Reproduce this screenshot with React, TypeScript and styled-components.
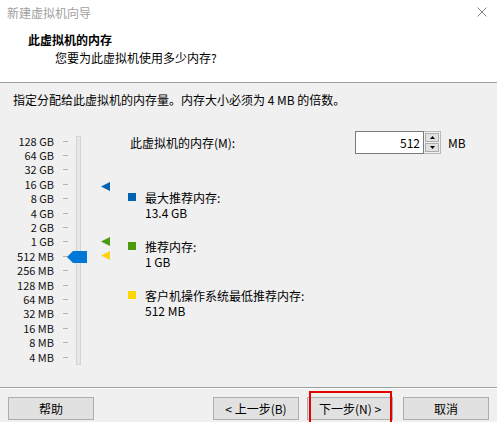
import styled, { createGlobalStyle } from "styled-components";

const GlobalStyle = createGlobalStyle`
  html, body {
    margin: 0;
    padding: 0;
    background: #f0f0f0;
  }
  * {
    box-sizing: border-box;
  }
`;

const font = `"Noto Sans CJK SC", "Noto Sans", sans-serif`;

const scaleLabels = [
  "128 GB",
  "64 GB",
  "32 GB",
  "16 GB",
  "8 GB",
  "4 GB",
  "2 GB",
  "1 GB",
  "512 MB",
  "256 MB",
  "128 MB",
  "64 MB",
  "32 MB",
  "16 MB",
  "8 MB",
  "4 MB",
];

const Wizard = styled.div`
  width: 497px;
  height: 422px;
  display: flex;
  flex-direction: column;
  background: #f0f0f0;
  font-family: ${font};
  font-size: 12px;
  color: #000;
  overflow: hidden;
  position: relative;
`;

const Header = styled.header`
  height: 83px;
  flex-shrink: 0;
  background: #fff;
  border-bottom: 1px solid #a0a0a0;
  display: flex;
  flex-direction: column;
`;

const TitleBar = styled.div`
  height: 26px;
  display: flex;
  align-items: center;
  justify-content: space-between;
  padding: 0 10px 0 7px;
`;

const WindowTitle = styled.span`
  color: #a0a0a0;
  font-size: 12px;
  line-height: 16px;
`;

const CloseGlyph = styled.svg`
  display: block;
  margin-top: -2px;
`;

const Heading = styled.h1`
  margin: 6px 0 0 28px;
  font-size: 12px;
  font-weight: 700;
  line-height: 16px;
`;

const Subheading = styled.p`
  margin: 2px 0 0 55px;
  font-size: 12px;
  line-height: 16px;
`;

const Body = styled.main`
  flex: 1;
  display: flex;
  flex-direction: column;
  padding-top: 9px;
`;

const Instruction = styled.p`
  margin: 0 0 0 13px;
  line-height: 16px;
`;

const MainRow = styled.div`
  display: flex;
  margin-top: 22px;
`;

const Scale = styled.div`
  position: relative;
  width: 128px;
  flex-shrink: 0;
  display: flex;
  height: 240px;
`;

const ScaleLabels = styled.div`
  width: 68px;
  padding-top: 4px;
  display: flex;
  flex-direction: column;
`;

const ScaleRow = styled.div`
  height: 14.4px;
  display: flex;
  align-items: center;
`;

const ScaleText = styled.span`
  width: 54px;
  text-align: right;
  font-size: 11px;
  line-height: 13px;
  color: #111;
  white-space: nowrap;
`;

const Tick = styled.span`
  width: 5px;
  height: 1px;
  margin-left: 9px;
  background: #b4b4b4;
`;

const Track = styled.div`
  margin: 6px 0 0 8px;
  width: 5px;
  height: 229px;
  border: 1px solid #d4d4d4;
  background: #e7e7e7;
`;

const Thumb = styled.svg`
  position: absolute;
  left: 67px;
  top: 121px;
`;

const Marker = styled.svg<{ $top: number }>`
  position: absolute;
  left: 101px;
  top: ${(p) => p.$top}px;
`;

const Content = styled.div`
  flex: 1;
  padding-right: 23px;
  display: flex;
  flex-direction: column;
`;

const MemoryRow = styled.div`
  display: flex;
  align-items: center;
  height: 23px;
  margin-top: 1px;
`;

const MemoryLabel = styled.label`
  flex: 1;
  padding-left: 2px;
  line-height: 16px;
`;

const TextField = styled.div`
  width: 69px;
  height: 23px;
  border: 1px solid #7a7a7a;
  background: #fff;
  text-align: right;
  padding-right: 3px;
  line-height: 21px;
  font-size: 12px;
`;

const Spinner = styled.div`
  width: 17px;
  height: 23px;
  border: 1px solid #b9b9b9;
  border-left: 0;
  background: #f0f0f0;
  display: flex;
  flex-direction: column;
  gap: 1px;
  padding: 1px;
`;

const SpinButton = styled.div`
  flex: 1;
  background: #e1e1e1;
  border: 1px solid #adadad;
  display: flex;
  align-items: center;
  justify-content: center;
`;

const Unit = styled.span`
  width: 26px;
  margin-left: 7px;
  line-height: 16px;
`;

const Legend = styled.div`
  margin-top: 36px;
  display: flex;
  flex-direction: column;
  gap: 19px;
`;

const LegendItem = styled.div`
  display: flex;
  align-items: flex-start;
`;

const Swatch = styled.span<{ $color: string }>`
  width: 8px;
  height: 8px;
  margin-top: 3px;
  margin-right: 9px;
  flex-shrink: 0;
  background: ${(p) => p.$color};
`;

const LegendText = styled.div`
  line-height: 15px;
`;

const Footer = styled.footer`
  height: 35px;
  flex-shrink: 0;
  border-top: 1px solid #a0a0a0;
  box-shadow: inset 0 1px 0 #fff;
  display: flex;
  align-items: flex-start;
  padding: 9px 8px 0 8px;
  position: relative;
`;

const Button = styled.button<{ $gap?: number }>`
  width: 86px;
  height: 23px;
  margin-left: ${(p) => p.$gap ?? 0}px;
  padding: 0;
  border: 1px solid #adadad;
  background: #e1e1e1;
  font-family: ${font};
  font-size: 12px;
  line-height: 16px;
  color: #000;
`;

const Highlight = styled.div`
  position: absolute;
  left: 309px;
  top: 3px;
  width: 83px;
  height: 40px;
  border: 2px solid #e60000;
  pointer-events: none;
`;

const markers = [
  { top: 52, color: "#0063b1" },
  { top: 107, color: "#4c9a0e" },
  { top: 121, color: "#fcd116" },
];

const legend = [
  { color: "#0063b1", label: "最大推荐内存:", value: "13.4 GB" },
  { color: "#4c9a0e", label: "推荐内存:", value: "1 GB" },
  { color: "#fcd700", label: "客户机操作系统最低推荐内存:", value: "512 MB" },
];

export default function App() {
  return (
    <Wizard>
      <GlobalStyle />
      <Header>
        <TitleBar>
          <WindowTitle>新建虚拟机向导</WindowTitle>
          <CloseGlyph width="10" height="10" viewBox="0 0 10 10">
            <path d="M0.5 0.5 L9.5 9.5 M9.5 0.5 L0.5 9.5" stroke="#8a8a8a" strokeWidth="1" />
          </CloseGlyph>
        </TitleBar>
        <Heading>此虚拟机的内存</Heading>
        <Subheading>您要为此虚拟机使用多少内存?</Subheading>
      </Header>

      <Body>
        <Instruction>指定分配给此虚拟机的内存量。内存大小必须为 4 MB 的倍数。</Instruction>
        <MainRow>
          <Scale>
            <ScaleLabels>
              {scaleLabels.map((label) => (
                <ScaleRow key={label}>
                  <ScaleText>{label}</ScaleText>
                  <Tick />
                </ScaleRow>
              ))}
            </ScaleLabels>
            <Track />
            <Thumb width="20" height="12" viewBox="0 0 20 12">
              <polygon points="0,6 6,0 20,0 20,12 6,12" fill="#0078d7" />
            </Thumb>
            {markers.map((m) => (
              <Marker key={m.top} $top={m.top} width="9" height="9" viewBox="0 0 9 9">
                <polygon points="0,4.5 9,0 9,9" fill={m.color} />
              </Marker>
            ))}
          </Scale>

          <Content>
            <MemoryRow>
              <MemoryLabel>此虚拟机的内存(M):</MemoryLabel>
              <TextField>512</TextField>
              <Spinner>
                <SpinButton>
                  <svg width="5" height="3" viewBox="0 0 5 3">
                    <polygon points="2.5,0 5,3 0,3" fill="#000" />
                  </svg>
                </SpinButton>
                <SpinButton>
                  <svg width="5" height="3" viewBox="0 0 5 3">
                    <polygon points="0,0 5,0 2.5,3" fill="#000" />
                  </svg>
                </SpinButton>
              </Spinner>
              <Unit>MB</Unit>
            </MemoryRow>

            <Legend>
              {legend.map((item) => (
                <LegendItem key={item.label}>
                  <Swatch $color={item.color} />
                  <LegendText>
                    <div>{item.label}</div>
                    <div>{item.value}</div>
                  </LegendText>
                </LegendItem>
              ))}
            </Legend>
          </Content>
        </MainRow>
      </Body>

      <Footer>
        <Button>帮助</Button>
        <Button $gap={119}>&lt; 上一步(B)</Button>
        <Button $gap={8}>下一步(N) &gt;</Button>
        <Button $gap={10}>取消</Button>
        <Highlight />
      </Footer>
    </Wizard>
  );
}
